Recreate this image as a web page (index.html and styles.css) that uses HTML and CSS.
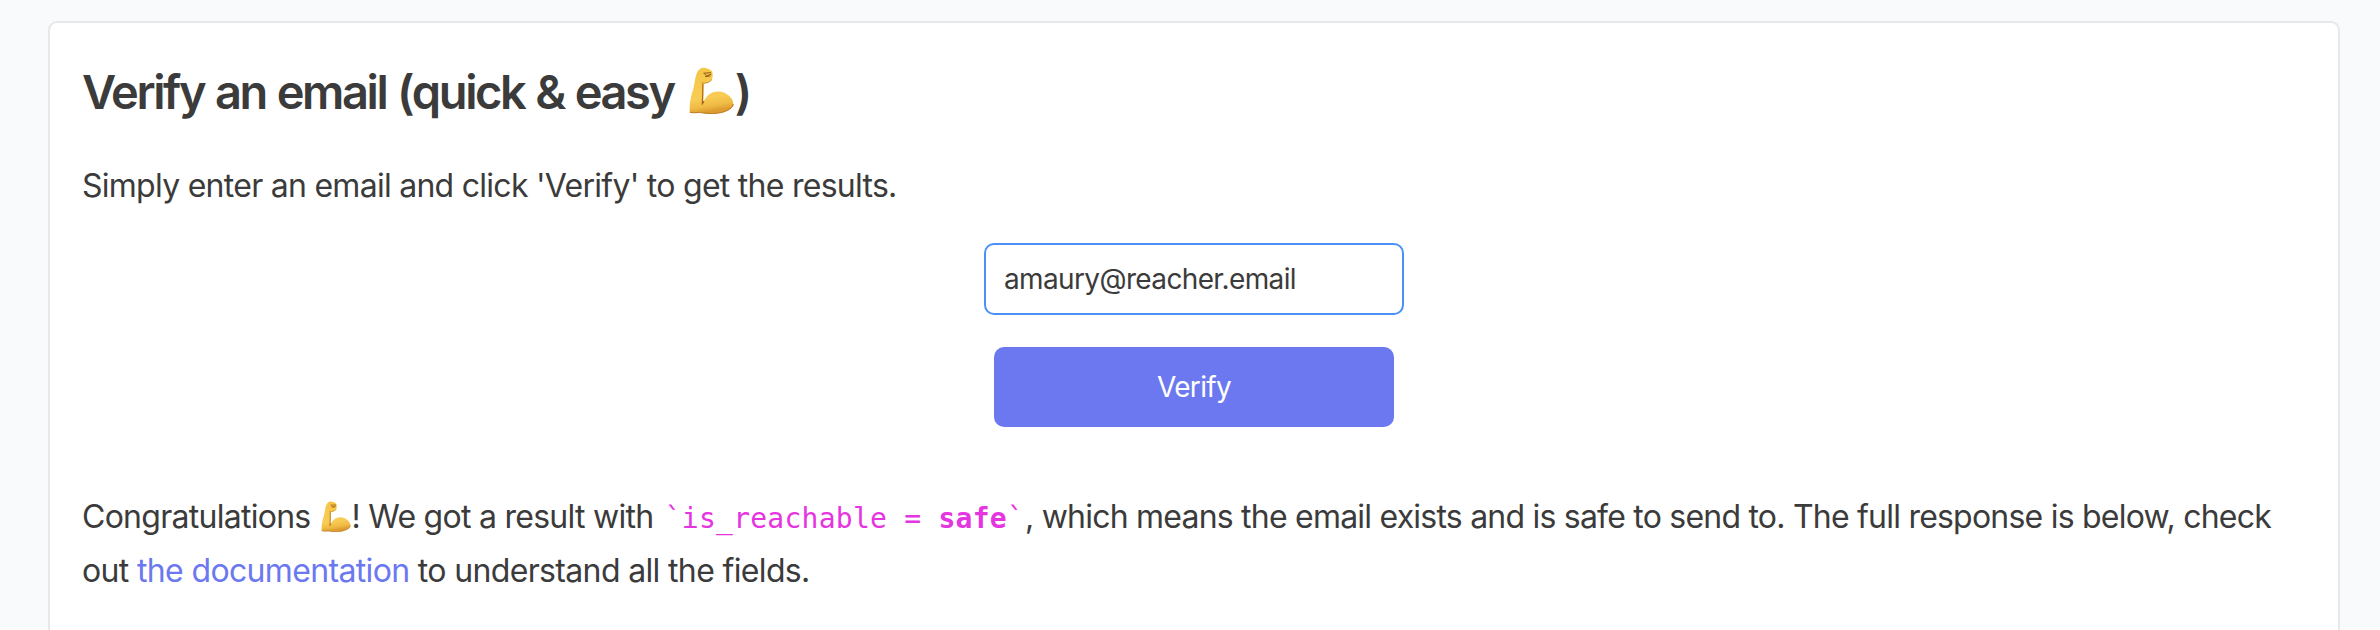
FILE: index.html
```html
<!DOCTYPE html>
<html lang="en">
<head>
<meta charset="utf-8">
<title>Verify an email</title>
<link rel="stylesheet" href="styles.css">
</head>
<body>
<svg class="defs" width="0" height="0" aria-hidden="true">
  <defs>
    <linearGradient id="skin" x1="0" y1="0" x2="0.15" y2="1">
      <stop offset="0" stop-color="#f6c544"/>
      <stop offset="0.7" stop-color="#f8cc55"/>
      <stop offset="0.88" stop-color="#f0bb45"/>
      <stop offset="1" stop-color="#dc9c2e"/>
    </linearGradient>
    <symbol id="biceps" viewBox="0 0 45 47">
      <path d="M.8 45.2C.2 38 1.7 29 4.200 22.500C5.500 17 6 11 7.500 7C9 3 12 .6 14.200 .8C17 1.100 21 1.800 23 4.300C24.200 7 23.800 10.500 22.800 12.800C20.500 15.300 17.500 16.300 14.800 16.600C14.300 22 14.600 29 14.300 35.500C17 29 22 24.600 29 24.600C37.500 24.600 44.300 31.200 44.300 37C44.300 42 34.500 46.300 24.500 46.500C18 46.600 13 45.900 10.500 45.400C7.500 45.800 3.500 46 .8 45.200Z" fill="url(#skin)"/>
      <path d="M.8 45.200C3.500 46 7.500 45.800 10.500 45.400C13 45.900 18 46.600 24.500 46.500C34.500 46.300 44.300 42 44.300 37" fill="none" stroke="#b9781f" stroke-width="1"/>
      <path d="M13.800 17C14 24 13.600 31 13.200 37.500C13.800 36.500 14.200 35.500 14.800 34" fill="none" stroke="#a9691d" stroke-width="1.200"/>
      <path d="M12.500 15.700C16 16.900 20 15.500 22.800 12.800" fill="none" stroke="#c98c28" stroke-width="1"/>
      <path d="M15 6.200L21.500 5.700M15.200 6.500L17.500 8.800L22 7.300M16.500 9.500L21 9" fill="none" stroke="#925817" stroke-width="1" stroke-linecap="round"/>
    </symbol>
  </defs>
</svg>
<main class="card">
  <h1 class="title"><span>Verify an email (quick &amp; easy</span><svg class="emoji-title" role="img" aria-label="flexed biceps"><use href="#biceps"/></svg><span>)</span></h1>
  <p class="text intro">Simply enter an email and click 'Verify' to get the results.</p>
  <form class="form">
    <input class="field" type="text" value="amaury@reacher.email" aria-label="Email">
    <button class="button" type="button">Verify</button>
  </form>
  <p class="text result"><span>Congratulations</span><svg class="emoji-text" role="img" aria-label="flexed biceps"><use href="#biceps"/></svg><span>! We got a result with </span><code class="code">`is_reachable = <b>safe</b>`</code><span class="means">, which means the email exists and is safe to send to. The full response is below, check</span><br><span class="docs">out <a class="link">the documentation</a> to understand all the fields.</span></p>
</main>
</body>
</html>
```

FILE: styles.css
```css
* { box-sizing: border-box; }
body {
  margin: 0;
  height: 630px;
  padding: 21px 40px 0 48px;
  background: #f9fafc;
  color: #3b3b3b;
  font-family: Inter, sans-serif;
}
.defs { position: absolute; }
.card {
  height: 609px;
  padding: 39px 32px 0;
  background: #fff;
  border: 2px solid #e8e8e8;
  border-bottom: 0;
  border-radius: 9px 9px 0 0;
}
.title {
  height: 60px;
  margin: 0 0 37px;
  font-size: 47px;
  line-height: 60px;
  font-weight: 600;
  letter-spacing: -2.4px;
  word-spacing: 1.3px;
  white-space: nowrap;
}
.emoji-title {
  width: 45px;
  height: 47px;
  margin: 0 1px 0 15px;
  vertical-align: -5px;
}
.text {
  height: 54px;
  margin: 0;
  font-size: 32px;
  line-height: 54px;
  letter-spacing: -0.73px;
  white-space: nowrap;
}
.form {
  display: flex;
  flex-direction: column;
  align-items: center;
  gap: 32px;
  margin: 30px 0 63px;
}
.field {
  width: 420px;
  height: 72px;
  padding: 0 18px;
  border: 2px solid #4a90f7;
  border-radius: 10px;
  outline: none;
  background: #fff;
  color: #3b3b3b;
  font: 28px Inter, sans-serif;
  letter-spacing: -0.63px;
}
.button {
  width: 400px;
  height: 80px;
  padding: 0;
  border: 0;
  border-radius: 10px;
  background: #6c78f0;
  color: #fff;
  font: 28px Inter, sans-serif;
  letter-spacing: -0.7px;
}
.result { height: 108px; }
.emoji-text {
  width: 30px;
  height: 31px;
  margin: 0 0 0 11px;
  vertical-align: -4px;
}
.code {
  margin: 0 1px 0 3px;
  color: #e535e0;
  font-family: "DejaVu Sans Mono", monospace;
  font-size: 28px;
  line-height: 1;
  letter-spacing: 0.25px;
}
.means { letter-spacing: -0.78px; }
.docs { letter-spacing: -0.65px; }
.link { color: #6c78f0; }
```
